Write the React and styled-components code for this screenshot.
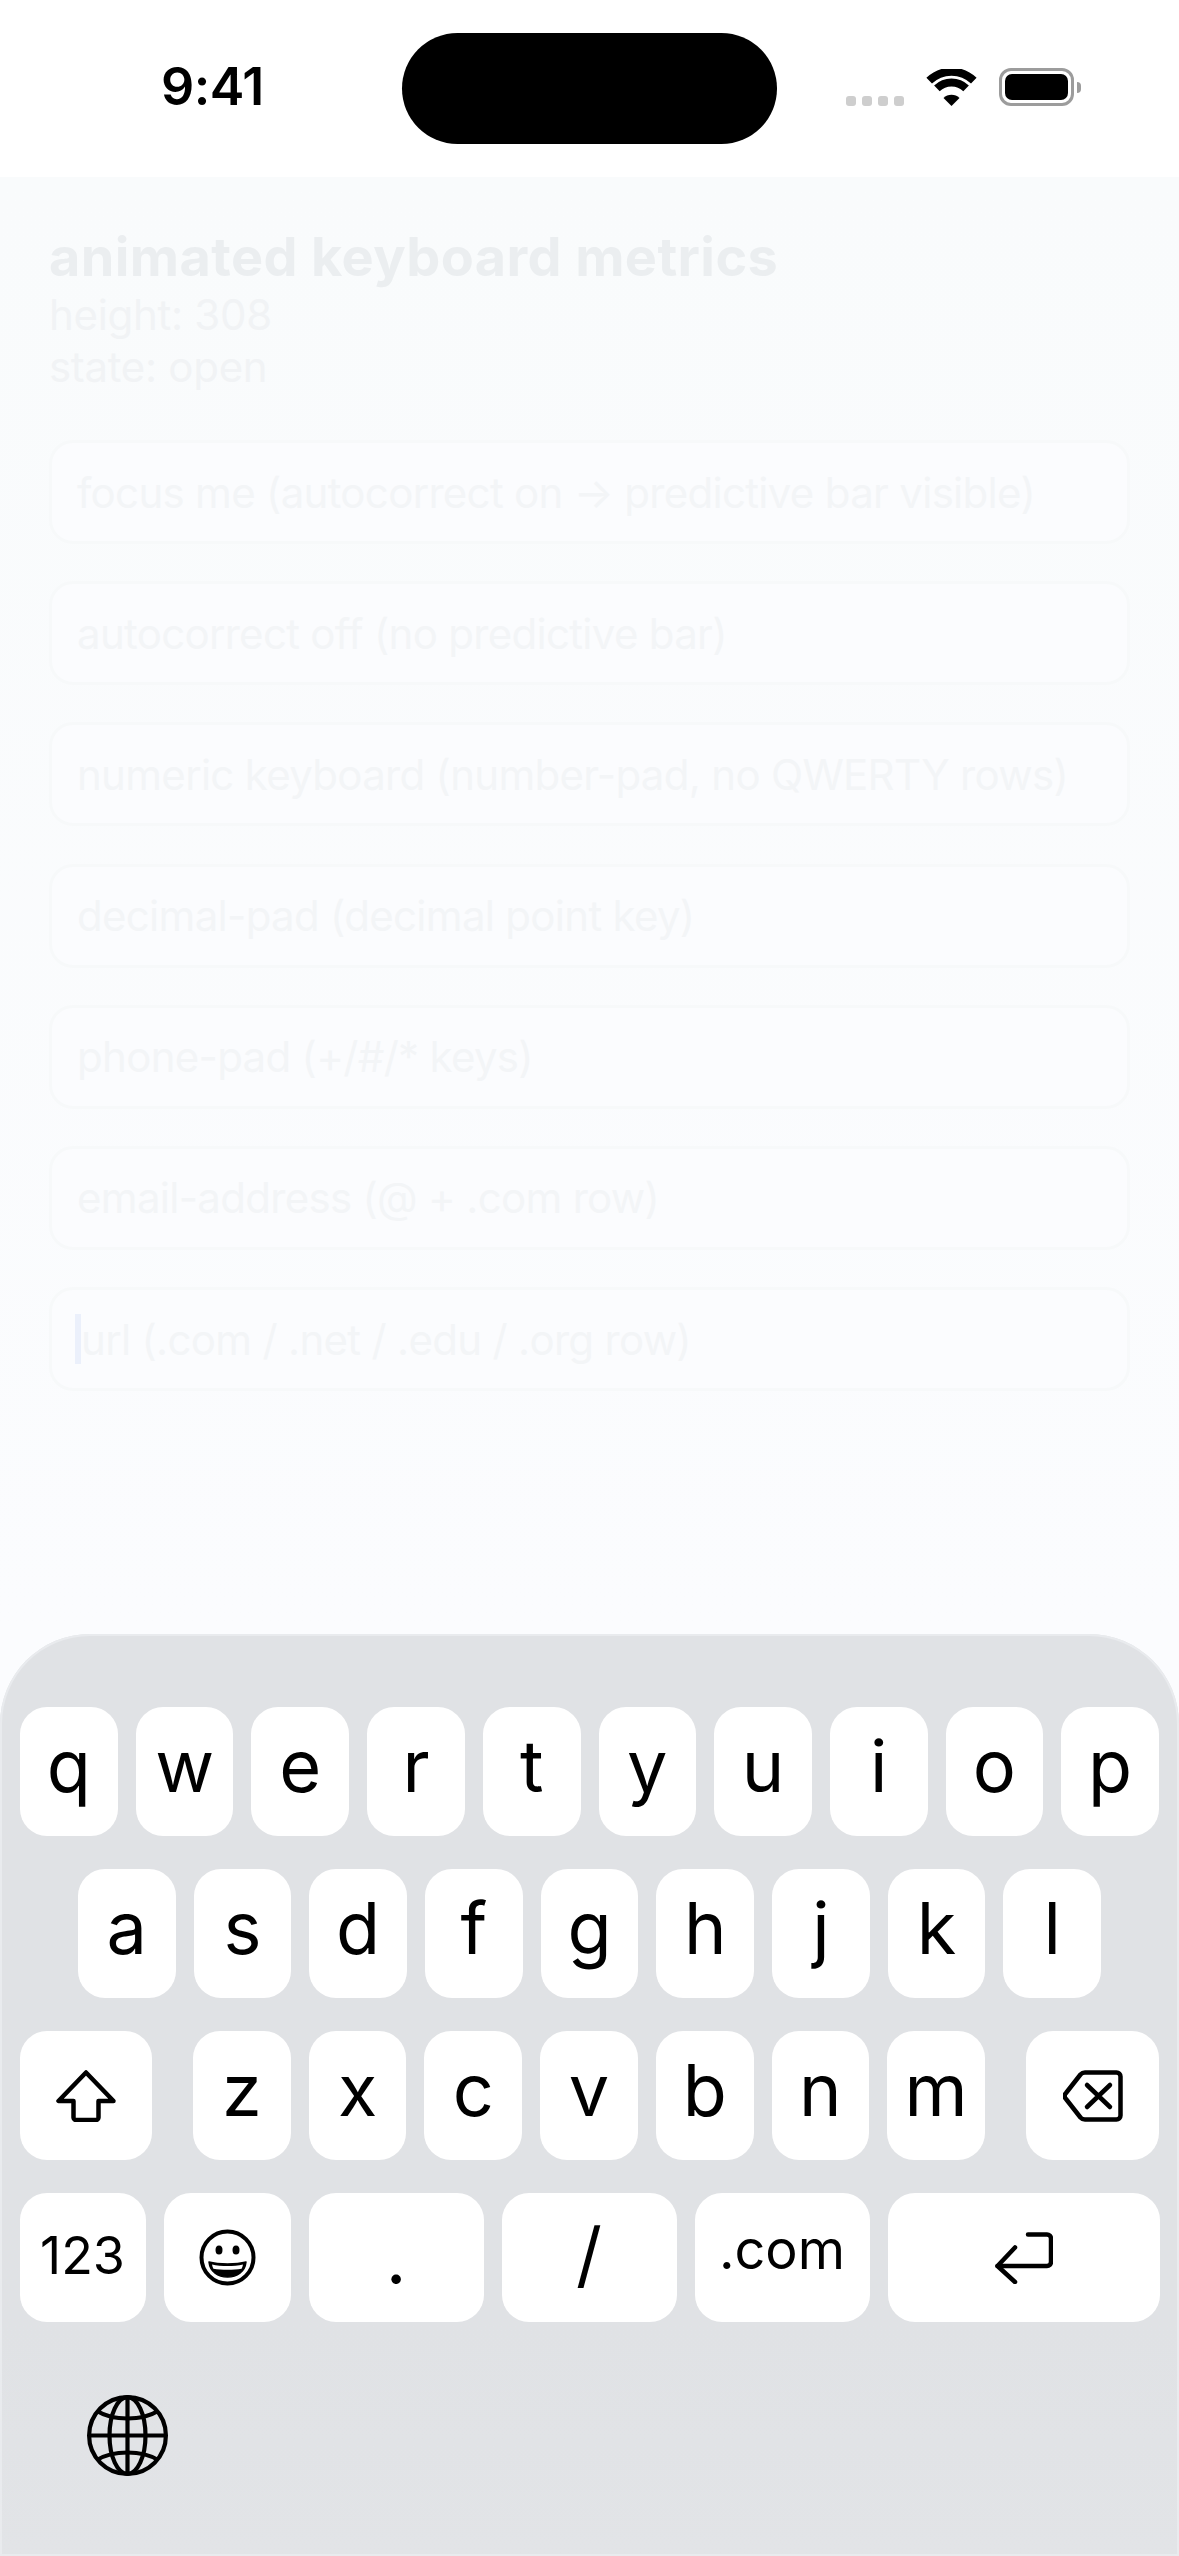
import styled, { createGlobalStyle } from "styled-components";

const GlobalStyle = createGlobalStyle`
  html, body {
    margin: 0;
    padding: 0;
    background: #fff;
  }
  * {
    box-sizing: border-box;
  }
`;

const Screen = styled.div`
  width: 1179px;
  height: 2556px;
  display: flex;
  flex-direction: column;
  overflow: hidden;
  background: #fbfcfe;
  font-family: Inter, "Liberation Sans", sans-serif;
  color: #000;
`;

const StatusBar = styled.div`
  height: 177px;
  flex-shrink: 0;
  display: grid;
  grid-template-columns: 402px 375px 402px;
  align-items: start;
  padding-top: 33px;
  background: #fff;
`;

const Time = styled.div`
  padding: 24px 0 0 161px;
  font-size: 52px;
  line-height: 60px;
  font-weight: 600;
  letter-spacing: -0.5px;
`;

const Island = styled.div`
  height: 111px;
  border-radius: 56px;
  background: #000;
`;

const StatusIcons = styled.div`
  display: flex;
  align-items: flex-end;
  gap: 22px;
  height: 73px;
  padding-left: 69px;
`;

const SignalDots = styled.div`
  display: flex;
  gap: 6px;
`;

const Dot = styled.span`
  width: 10px;
  height: 10px;
  border-radius: 3px;
  background: #cecece;
`;

const Battery = styled.div`
  position: relative;
  width: 75px;
  height: 38px;
  padding: 3px;
  border: 3px solid #9c9c9c;
  border-radius: 12px;
  &::before {
    content: "";
    display: block;
    height: 100%;
    border-radius: 7px;
    background: #000;
  }
  &::after {
    content: "";
    position: absolute;
    top: 11px;
    right: -10px;
    width: 4px;
    height: 11px;
    border-radius: 0 4px 4px 0;
    background: #9c9c9c;
  }
`;

const Content = styled.div`
  flex: 1;
  min-height: 0;
  padding: 48px 49px 0;
  background: linear-gradient(#f9fbfc, #fbfcfe);
`;

const Title = styled.div`
  font-size: 54px;
  line-height: 64px;
  font-weight: 700;
  letter-spacing: 0.4px;
  color: #ebeef0;
`;

const Metric = styled.div`
  font-size: 42px;
  line-height: 52px;
  letter-spacing: -0.3px;
  color: #f1f3f5;
`;

const Fields = styled.div`
  display: flex;
  flex-direction: column;
  gap: 37.2px;
  margin-top: 47px;
`;

const Field = styled.div`
  height: 104px;
  display: flex;
  align-items: center;
  padding: 0 25px;
  border: 3px solid #f7f9fa;
  border-radius: 24px;
  background: #fbfcfe;
  font-size: 42px;
  letter-spacing: -0.7px;
  color: #f3f5f7;
  white-space: nowrap;
`;

const Caret = styled.span`
  width: 6px;
  height: 50px;
  margin-left: -2px;
  background: #ebf0fb;
`;

const Keyboard = styled.div`
  height: 922px;
  flex-shrink: 0;
  display: flex;
  flex-direction: column;
  gap: 33px;
  padding: 73px 20px 0;
  border-radius: 90px 90px 0 0;
  background: linear-gradient(#e0e2e5, #e0e2e5 75%, #e2e4e7);
  box-shadow: inset 0 0 0 2px #e9ebee;
`;

const KeyRow = styled.div`
  display: flex;
  justify-content: ${(p) => p.$justify || "center"};
  gap: ${(p) => p.$gap || 18}px;
`;

const Key = styled.div`
  width: ${(p) => p.$width || 97.7}px;
  height: 129px;
  flex-shrink: 0;
  display: flex;
  align-items: center;
  justify-content: center;
  padding-bottom: ${(p) => p.$lift ?? 12}px;
  border-radius: 27px;
  background: #fff;
  font-size: ${(p) => p.$size || 72}px;
  line-height: 1;
  color: #000;
`;

const IconKey = styled(Key)`
  padding-bottom: 0;
`;

const LetterGroup = styled.div`
  display: flex;
  gap: 18px;
`;

const GlobeRow = styled.div`
  padding: 40px 0 0 67px;
`;

const ROW_1 = ["q", "w", "e", "r", "t", "y", "u", "i", "o", "p"];
const ROW_2 = ["a", "s", "d", "f", "g", "h", "j", "k", "l"];
const ROW_3 = ["z", "x", "c", "v", "b", "n", "m"];

const FIELD_LABELS = [
  "focus me (autocorrect on → predictive bar visible)",
  "autocorrect off (no predictive bar)",
  "numeric keyboard (number-pad, no QWERTY rows)",
  "decimal-pad (decimal point key)",
  "phone-pad (+/#/* keys)",
  "email-address (@ + .com row)",
];

function WifiIcon() {
  return (
    <svg width="51" height="37" viewBox="0 0 51 37" fill="none" stroke="#000" strokeWidth="8">
      <path d="M3.200 11.700a32 32 0 0 1 44.600 0" />
      <path d="M10.900 19.400a21 21 0 0 1 29.200 0" />
      <path d="M25.500 37l-8-8a11.300 11.300 0 0 1 16 0z" fill="#000" stroke="none" />
    </svg>
  );
}

function ShiftIcon() {
  return (
    <svg width="60" height="52" viewBox="0 0 60 52" fill="none" stroke="#000" strokeWidth="4.500" strokeLinejoin="round">
      <path d="M30 2.500L2.500 31h15v16.500a2.500 2.500 0 0 0 2.500 2.500h20a2.500 2.500 0 0 0 2.500-2.500V31h15z" />
    </svg>
  );
}

function DeleteIcon() {
  return (
    <svg width="60" height="52" viewBox="0 0 60 52" fill="none" stroke="#000" strokeWidth="4.500" strokeLinecap="round" strokeLinejoin="round">
      <path d="M22 2.500h31.500a4 4 0 0 1 4 4v39a4 4 0 0 1-4 4H22a6 6 0 0 1-4.500-2L3 29a4 4 0 0 1 0-6L17.500 4.500a6 6 0 0 1 4.500-2z" />
      <path d="M24 15l23 22M47 15L24 37" />
    </svg>
  );
}

function ReturnIcon() {
  return (
    <svg width="58" height="52" viewBox="0 0 58 52" fill="none" stroke="#000" strokeWidth="4.500" strokeLinecap="round" strokeLinejoin="round">
      <path d="M33 2.500h19a4 4 0 0 1 4 4v23.500a4 4 0 0 1-4 4H2.500" />
      <path d="M20 15.500L2.500 34 20 50" />
    </svg>
  );
}

function EmojiIcon() {
  return (
    <svg width="57" height="57" viewBox="0 0 57 57" fill="none" stroke="#000" strokeWidth="4">
      <circle cx="28.500" cy="28.500" r="26" />
      <ellipse cx="20" cy="21" rx="3.500" ry="4.500" fill="#000" stroke="none" />
      <ellipse cx="37" cy="21" rx="3.500" ry="4.500" fill="#000" stroke="none" />
      <path d="M10 33c10 2.500 27 2.500 37 0-1 10-9 15-18.500 15S11 43 10 33z" fill="#000" stroke="#000" strokeWidth="1.500" strokeLinejoin="round" />
      <path d="M13 35.500c9 2 22 2 31 0-.3 1.600-.7 3-1.400 4.200-8 1.300-20 1.300-28.200 0-.7-1.200-1.100-2.600-1.400-4.200z" fill="#fff" stroke="none" />
    </svg>
  );
}

function GlobeIcon() {
  return (
    <svg width="81" height="81" viewBox="0 0 81 81" fill="none" stroke="#000" strokeWidth="4.200">
      <circle cx="40.500" cy="40.500" r="38.400" />
      <ellipse cx="40.500" cy="40.500" rx="18" ry="38.400" />
      <path d="M40.500 2v77M2 40.500h77" />
      <path d="M10 16c8 5 19 7.500 30.500 7.500S63 21 71 16" />
      <path d="M10 65c8-5 19-7.500 30.500-7.500S63 60 71 65" />
    </svg>
  );
}

export default function App() {
  return (
    <>
      <GlobalStyle />
      <Screen>
        <StatusBar>
          <Time>9:41</Time>
          <Island />
          <StatusIcons>
            <SignalDots>
              <Dot />
              <Dot />
              <Dot />
              <Dot />
            </SignalDots>
            <WifiIcon />
            <Battery />
          </StatusIcons>
        </StatusBar>

        <Content>
          <Title>animated keyboard metrics</Title>
          <Metric>height: 308</Metric>
          <Metric>state: open</Metric>
          <Fields>
            {FIELD_LABELS.map((label) => (
              <Field key={label}>{label}</Field>
            ))}
            <Field>
              <Caret />
              url (.com / .net / .edu / .org row)
            </Field>
          </Fields>
        </Content>

        <Keyboard>
          <KeyRow>
            {ROW_1.map((k) => (
              <Key key={k}>{k}</Key>
            ))}
          </KeyRow>
          <KeyRow>
            {ROW_2.map((k) => (
              <Key key={k}>{k}</Key>
            ))}
          </KeyRow>
          <KeyRow $justify="space-between" $gap={0}>
            <IconKey $width={132}>
              <ShiftIcon />
            </IconKey>
            <LetterGroup>
              {ROW_3.map((k) => (
                <Key key={k}>{k}</Key>
              ))}
            </LetterGroup>
            <IconKey $width={133}>
              <DeleteIcon />
            </IconKey>
          </KeyRow>
          <KeyRow>
            <Key $width={126} $size={52} $lift={4}>
              123
            </Key>
            <IconKey $width={127}>
              <EmojiIcon />
            </IconKey>
            <Key $width={175} $lift={0}>
              .
            </Key>
            <Key $width={175} $lift={8}>
              /
            </Key>
            <Key $width={175} $size={54} $lift={15}>
              .com
            </Key>
            <IconKey $width={272}>
              <ReturnIcon />
            </IconKey>
          </KeyRow>
          <GlobeRow>
            <GlobeIcon />
          </GlobeRow>
        </Keyboard>
      </Screen>
    </>
  );
}
